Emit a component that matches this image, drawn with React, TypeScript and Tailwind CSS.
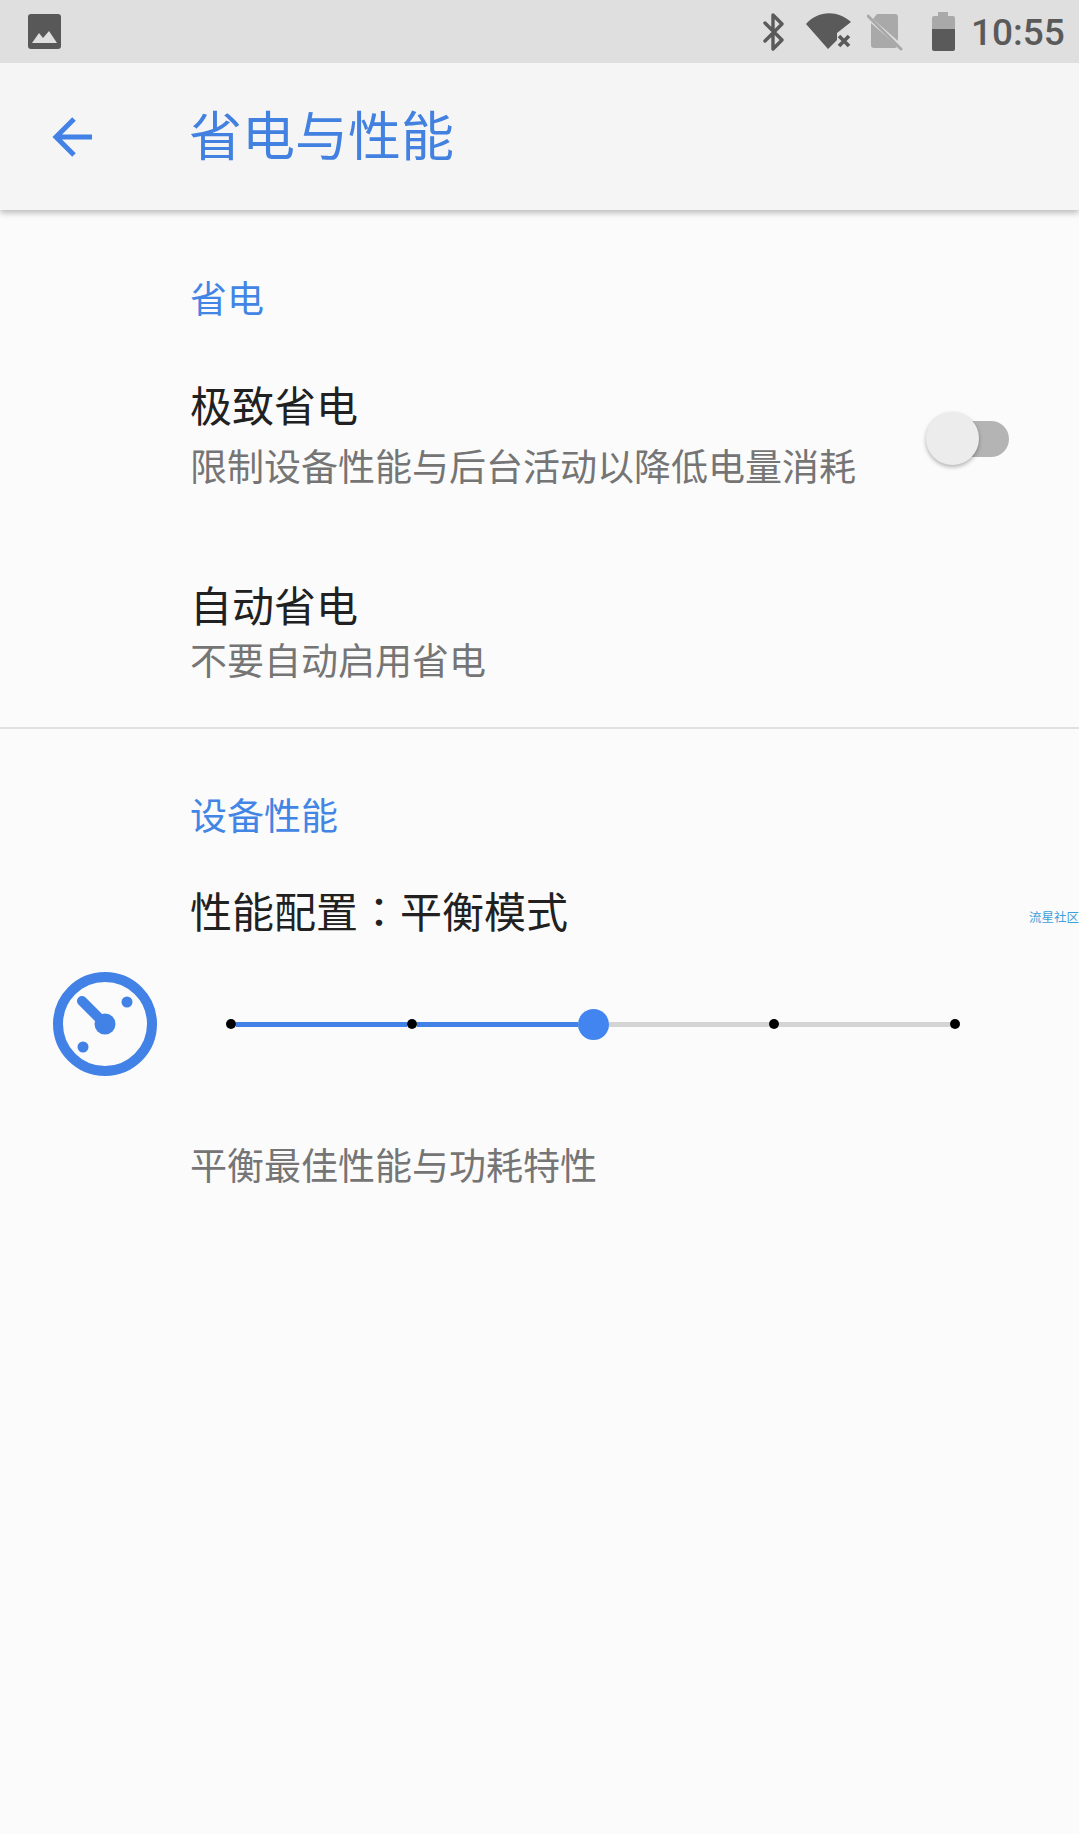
const CJK = "font-['Roboto','Noto_Sans_CJK_SC',sans-serif]";

function StatusIcons() {
  return (
    <div className="flex items-center">
      {/* bluetooth */}
      <svg width="24" height="38" viewBox="0 0 24 38" fill="none" className="mr-[20px]">
        <path d="M3 10 L20 27 L11 36 V2 L20 11 L3 28" stroke="#5a5a5a" strokeWidth="3.4" strokeLinecap="round" strokeLinejoin="round" />
      </svg>
      {/* wifi without internet */}
      <svg width="46" height="37" viewBox="0 0 46 37" className="mr-[15px]">
        <path d="M0 11 C12 -3 32 -3 45 9 L31 20 V27 L22 36 Z" fill="#5a5a5a" />
        <path d="M33 23 L43 33 M43 23 L33 33" stroke="#5a5a5a" strokeWidth="3.6" />
      </svg>
      {/* no sim */}
      <svg width="36" height="38" viewBox="0 0 36 38" className="mr-[29px]">
        <path d="M6 6 L10 1 H28 Q31 1 31 4 V28 Z M4 10 V32 Q4 35 7 35 H28 Q30 35 30 33 Z" fill="#a9a9a9" />
        <path d="M1 3 L34 36" stroke="#a9a9a9" strokeWidth="3" strokeLinecap="round" />
      </svg>
      {/* battery */}
      <svg width="23" height="39" viewBox="0 0 23 39" className="mr-[16px]">
        <path d="M6 0 H16 V4 H21 Q23 4 23 6 V17 H0 V6 Q0 4 2 4 H6 Z" fill="#a9a9a9" />
        <path d="M0 17 H23 V37 Q23 39 21 39 H2 Q0 39 0 37 Z" fill="#5a5a5a" />
      </svg>
      <span className="mt-[2px] text-[37px] leading-none font-['Roboto',sans-serif] text-[#5a5a5a] font-medium w-[92px]">10:55</span>
    </div>
  );
}

function SectionTitle({ children, className }: { children: string; className: string }) {
  return <div className={`pl-[190px] text-[37px] leading-[48px] text-[#4285e4] ${className}`}>{children}</div>;
}

function Slider() {
  return (
    <div className="flex items-center">
      <div className="w-[10px] h-[10px] rounded-full bg-black" />
      <div className="w-[171px] h-[5px] bg-[#4281e6]" />
      <div className="w-[10px] h-[10px] rounded-full bg-black" />
      <div className="w-[161px] h-[5px] bg-[#4281e6]" />
      <div className="w-[31px] h-[31px] rounded-full bg-[#4285f0]" />
      <div className="w-[160px] h-[5px] bg-[#d4d4d4]" />
      <div className="w-[10px] h-[10px] rounded-full bg-black" />
      <div className="w-[171px] h-[5px] bg-[#d4d4d4]" />
      <div className="w-[10px] h-[10px] rounded-full bg-black" />
    </div>
  );
}

export default function App() {
  return (
    <div className={`relative w-[1079px] h-[1834px] overflow-hidden bg-[#fbfbfb] ${CJK}`}>
      {/* status bar */}
      <div className="relative z-10 h-[63px] bg-[#dfdfdf] flex items-center justify-between pl-[28px] pr-[16px]">
        <svg width="33" height="35" viewBox="0 0 33 35">
          <rect width="33" height="35" rx="3" fill="#585858" />
          <path d="M4 29 L11 19 L15 24 L21 17 L29 29 Z" fill="#dfdfdf" />
        </svg>
        <StatusIcons />
      </div>

      {/* toolbar */}
      <div className="relative h-[147px] bg-[#f5f5f5] flex items-center shadow-[0_3px_6px_rgba(0,0,0,0.25)]">
        <svg width="42" height="42" viewBox="0 0 42 42" className="ml-[52px]">
          <path d="M40 21 H4 M22 3 L4 21 L22 39" fill="none" stroke="#4281e6" strokeWidth="5" />
        </svg>
        <span className="ml-[95px] mt-[4px] text-[53px] leading-none text-[#4281e0]">省电与性能</span>
      </div>

      <SectionTitle className="mt-[67px]">省电</SectionTitle>

      {/* battery saver row */}
      <div className="flex items-center justify-between pl-[190px] pr-[70px] mt-[53px]">
        <div>
          <div className="text-[42px] leading-[60px] text-[#212121]">极致省电</div>
          <div className="text-[37px] leading-[50px] mt-[6px] text-[#757575]">限制设备性能与后台活动以降低电量消耗</div>
        </div>
        <div className="relative w-[83px] h-[54px] mt-[6px] flex items-center justify-end">
          <div className="w-[70px] h-[36px] rounded-full bg-[#b4b4b4]" />
          <div className="absolute left-0 top-0 w-[53px] h-[53px] rounded-full bg-[#ececec] shadow-[0_2px_4px_rgba(0,0,0,0.3)]" />
        </div>
      </div>

      {/* auto saver row */}
      <div className="pl-[190px] mt-[84px]">
        <div className="text-[42px] leading-[60px] text-[#212121]">自动省电</div>
        <div className="text-[37px] leading-[50px] text-[#757575]">不要自动启用省电</div>
      </div>

      <div className="h-[2px] bg-[#e0e0e0] mt-[39px]" />

      <SectionTitle className="mt-[65px]">设备性能</SectionTitle>

      <div className="pl-[190px] mt-[38px] text-[42px] leading-[60px] text-[#212121]">
        性能配置<span className="font-['Noto_Sans_CJK_TC',sans-serif]">：</span>平衡模式
      </div>

      {/* performance slider */}
      <div className="flex items-center pl-[53px] mt-[28px]">
        <svg width="104" height="104" viewBox="0 0 104 104">
          <circle cx="52" cy="52" r="47" fill="none" stroke="#4281e6" strokeWidth="10" />
          <path d="M29 29 L52 52" stroke="#4281e6" strokeWidth="10" strokeLinecap="round" />
          <circle cx="52" cy="52" r="10.5" fill="#4281e6" />
          <circle cx="74" cy="30" r="5.5" fill="#4281e6" />
          <circle cx="30" cy="75" r="5.5" fill="#4281e6" />
        </svg>
        <div className="ml-[69px]">
          <Slider />
        </div>
      </div>

      <div className="pl-[190px] mt-[67px] text-[37px] leading-[50px] text-[#757575]">平衡最佳性能与功耗特性</div>

      {/* watermark */}
      <div className="absolute left-[1029px] top-[910px] text-[12.5px] leading-[16px] whitespace-nowrap text-[#3f9fd8]">流星社区</div>
    </div>
  );
}
